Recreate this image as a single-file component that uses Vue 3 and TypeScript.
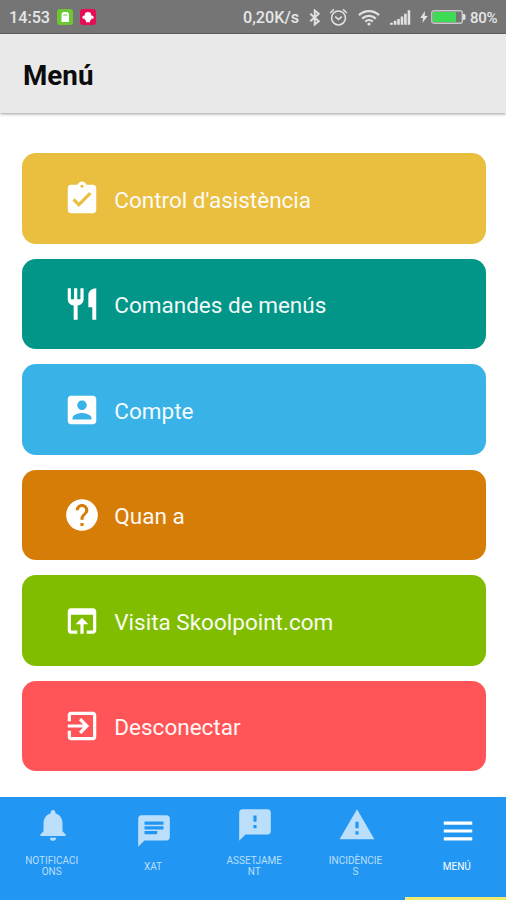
<script setup lang="ts">
interface MenuItem {
  label: string
  tone: string
  icon: string
}

interface Tab {
  lines: string[]
  icon: string
  active?: boolean
}

const items: MenuItem[] = [
  {
    label: "Control d'asistència",
    tone: 'yellow',
    icon: 'M19 3h-4.18C14.4 1.84 13.3 1 12 1c-1.3 0-2.4.84-2.82 2H5c-1.1 0-2 .9-2 2v14c0 1.1.9 2 2 2h14c1.1 0 2-.9 2-2V5c0-1.1-.9-2-2-2zm-7 0c.55 0 1 .45 1 1s-.45 1-1 1-1-.45-1-1 .45-1 1-1zm-2 14l-4-4 1.41-1.41L10 14.17l6.59-6.59L18 9l-8 8z',
  },
  {
    label: 'Comandes de menús',
    tone: 'teal',
    icon: 'M11 9H9V2H7v7H5V2H3v7c0 2.12 1.66 3.84 3.75 3.97V22h2.5v-9.03C11.34 12.84 13 11.12 13 9V2h-2v7zm5-3v8h2.5v8H21V2c-2.76 0-5 2.24-5 4z',
  },
  {
    label: 'Compte',
    tone: 'sky',
    icon: 'M3 5v14c0 1.1.89 2 2 2h14c1.1 0 2-.9 2-2V5c0-1.1-.9-2-2-2H5c-1.11 0-2 .9-2 2zm12 4c0 1.66-1.34 3-3 3s-3-1.34-3-3 1.34-3 3-3 3 1.34 3 3zm-9 8c0-2 4-3.1 6-3.1s6 1.1 6 3.1v1H6v-1z',
  },
  {
    label: 'Quan a',
    tone: 'orange',
    icon: 'M12 2C6.48 2 2 6.48 2 12s4.48 10 10 10 10-4.48 10-10S17.52 2 12 2zm1 17h-2v-2h2v2zm2.07-7.75l-.9.92C13.45 12.9 13 13.5 13 15h-2v-.5c0-1.1.45-2.1 1.17-2.83l1.24-1.26c.37-.36.59-.86.59-1.41 0-1.1-.9-2-2-2s-2 .9-2 2H8c0-2.21 1.79-4 4-4s4 1.79 4 4c0 .88-.36 1.68-.93 2.25z',
  },
  {
    label: 'Visita Skoolpoint.com',
    tone: 'green',
    icon: 'M19 4H5c-1.11 0-2 .9-2 2v12c0 1.1.89 2 2 2h4v-2H5V8h14v10h-4v2h4c1.1 0 2-.9 2-2V6c0-1.1-.89-2-2-2zm-7 6l-4 4h3v6h2v-6h3l-4-4z',
  },
  {
    label: 'Desconectar',
    tone: 'red',
    icon: 'M10.09 15.59L11.5 17l5-5-5-5-1.41 1.41L12.67 11H3v2h9.67l-2.58 2.59zM19 3H5c-1.11 0-2 .9-2 2v4h2V5h14v14H5v-4H3v4c0 1.1.89 2 2 2h14c1.1 0 2-.9 2-2V5c0-1.1-.9-2-2-2z',
  },
]

const tabs: Tab[] = [
  {
    lines: ['NOTIFICACI', 'ONS'],
    icon: 'M12 22c1.1 0 2-.9 2-2h-4c0 1.1.89 2 2 2zm6-6v-5c0-3.07-1.64-5.64-4.5-6.32V4c0-.83-.67-1.5-1.5-1.5s-1.5.67-1.5 1.5v.68C7.63 5.36 6 7.92 6 11v5l-2 2v1h16v-1l-2-2z',
  },
  {
    lines: ['XAT'],
    icon: 'M20 2H4c-1.1 0-1.99.9-1.99 2L2 22l4-4h14c1.1 0 2-.9 2-2V4c0-1.1-.9-2-2-2zM6 9h12v2H6V9zm8 5H6v-2h8v2zm4-6H6V6h12v2z',
  },
  {
    lines: ['ASSETJAME', 'NT'],
    icon: 'M20 2H4c-1.1 0-1.99.9-1.99 2L2 22l4-4h14c1.1 0 2-.9 2-2V4c0-1.1-.9-2-2-2zm-7 12h-2v-2h2v2zm0-4h-2V6h2v4z',
  },
  {
    lines: ['INCIDÈNCIE', 'S'],
    icon: 'M1 21h22L12 2 1 21zm12-3h-2v-2h2v2zm0-4h-2v-4h2v4z',
  },
  {
    lines: ['MENÚ'],
    icon: 'M3 18h18v-2H3v2zm0-5h18v-2H3v2zm0-7v2h18V6H3z',
    active: true,
  },
]
</script>

<template>
  <div class="screen">
    <div class="status">
      <div class="status-left">
        <span class="clock">14:53</span>
        <svg class="badge" viewBox="0 0 16 16">
          <rect width="16" height="16" rx="3" fill="#6cc832" />
          <path d="M4.500 5L6 3h4.500L12 5v8H4.500z" fill="#fff" />
          <path d="M6.300 6h4" stroke="#6cc832" stroke-width="1" />
        </svg>
        <svg class="badge" viewBox="0 0 16 16">
          <rect width="16" height="16" rx="3" fill="#e80c55" />
          <path d="M4.800 6.200a3.200 3.200 0 0 1 6.400 0l2.300 1v2.300l-2.300.3v1.400H10V13.300H6V11.200H4.800V9.800l-2.300-.3V7.200z" fill="#fff" />
        </svg>
      </div>
      <div class="status-right">
        <span class="speed">0,20K/s</span>
        <svg class="bluetooth" viewBox="0 0 12 18" fill="none" stroke="#e2e2e2" stroke-width="2">
          <path d="M1 5l9 8-4.300 3.500v-15L10 5l-9 8" />
        </svg>
        <svg class="alarm" viewBox="0 0 20 20" fill="none" stroke="#e2e2e2" stroke-width="1.6">
          <circle cx="10" cy="10.500" r="7.300" />
          <path d="M6.500 9l3.500 3 3.500-3M1.200 5.200l4-3.700M18.800 5.200l-4-3.700" />
        </svg>
        <svg class="wifi" viewBox="0 0 22 17" fill="none" stroke="#e2e2e2" stroke-width="2.300">
          <path d="M1 6.200a14.500 14.500 0 0 1 20 0M4.200 9.600a9.800 9.800 0 0 1 13.600 0M7.300 12.600a5.400 5.400 0 0 1 7.400 0" />
          <circle cx="11" cy="15" r="1.600" fill="#e2e2e2" stroke="none" />
        </svg>
        <svg class="signal" viewBox="0 0 22 15" fill="#e2e2e2">
          <path d="M0 13h3v2H0zM4 11h2.700v4H4zM7.600 9h2.700v6H7.600zM11.200 6.500h2.700V15h-2.700zM14.800 3.500h2.700V15h-2.700zM18.500 0h2.700v15h-2.700z" />
        </svg>
        <svg class="bolt" viewBox="0 0 8 14" fill="#e2e2e2">
          <path d="M5 0L0 7.600h3L2.300 13 8 5.500H4.800z" />
        </svg>
        <svg class="battery" viewBox="0 0 35 14">
          <rect x=".8" y=".8" width="30.500" height="12.400" rx="2" fill="none" stroke="#c9c9c9" stroke-width="1.400" />
          <rect x="2" y="2" width="23" height="10" fill="#3edb55" />
          <path d="M32 4h1.500l1 1.500v3L33.500 10H32z" fill="#e2e2e2" />
        </svg>
        <span class="percent">80%</span>
      </div>
    </div>

    <header class="header"><h1>Menú</h1></header>

    <main class="menu">
      <button v-for="item in items" :key="item.label" class="card" :class="item.tone">
        <svg class="icon" viewBox="0 0 24 24"><path :d="item.icon" /></svg>
        <span class="label">{{ item.label }}</span>
      </button>
    </main>

    <nav class="tabs">
      <div v-for="tab in tabs" :key="tab.lines[0]" class="tab" :class="{ active: tab.active }">
        <svg class="icon" viewBox="0 0 24 24"><path :d="tab.icon" /></svg>
        <div class="caption">
          <div v-for="line in tab.lines" :key="line">{{ line }}</div>
        </div>
      </div>
      <div class="indicator"></div>
    </nav>
  </div>
</template>

<style>
body {
  margin: 0;
}
</style>

<style scoped>
.screen {
  display: flex;
  flex-direction: column;
  width: 506px;
  height: 900px;
  overflow: hidden;
  background: #fff;
  font-family: Roboto, sans-serif;
}

.status {
  display: flex;
  flex: none;
  justify-content: space-between;
  box-sizing: border-box;
  height: 34px;
  padding: 2px 8px 0 9px;
  background: #757575;
  border-bottom: 1px solid #666;
  color: #e6e6e6;
  font-size: 16.2px;
  font-weight: 500;
}

.status-left,
.status-right {
  display: flex;
  align-items: center;
}

.badge {
  width: 16px;
  height: 16px;
  margin: -1px 0 0 7px;
}

.clock {
  width: 41px;
}

.speed {
  width: 57px;
}

.bluetooth {
  width: 12px;
  height: 17px;
  margin-left: 9px;
}

.alarm {
  width: 19px;
  height: 19px;
  margin: -1px 0 0 8px;
}

.wifi {
  width: 22px;
  height: 17px;
  margin: -1px 0 0 10px;
}

.signal {
  width: 21px;
  height: 15px;
  margin-left: 10px;
}

.bolt {
  width: 8px;
  height: 13px;
  margin: -1px 0 0 9px;
}

.battery {
  width: 35px;
  height: 14px;
  margin: -1px 0 0 3px;
}

.percent {
  width: 28px;
  margin-left: 4px;
  font-size: 15px;
  letter-spacing: -0.3px;
}

.header {
  z-index: 1;
  display: flex;
  flex: none;
  align-items: center;
  height: 79px;
  padding-left: 23px;
  background: #e9e9e9;
  box-shadow: 0 1px 3px rgba(0, 0, 0, 0.4);
}

.header h1 {
  margin: 5px 0 0;
  color: #0c0c0c;
  font-size: 27.8px;
  font-weight: 700;
  line-height: 32px;
}

.menu {
  display: flex;
  flex: 1;
  flex-direction: column;
  gap: 14.9px;
  padding: 40.2px 20.5px 0 21.5px;
}

.card {
  display: flex;
  flex: none;
  align-items: center;
  width: 100%;
  height: 90.6px;
  padding: 0 0 0 41.5px;
  border: 0;
  border-radius: 14px;
  color: #fff;
  font-family: inherit;
}

.icon {
  flex: none;
  width: 38px;
  height: 38px;
  fill: currentColor;
}

.card .icon {
  margin-top: 1px;
}

.label {
  margin: 3px 0 0 13.3px;
  font-size: 22.5px;
  line-height: 28px;
  opacity: 0.95;
}

.yellow { background: #eabe3f; }
.teal { background: #019687; }
.sky { background: #39b3e7; }
.orange { background: #d67d08; }
.green { background: #80bd01; }
.red { background: #ff5558; }

.tabs {
  position: relative;
  display: grid;
  flex: none;
  grid-template-columns: repeat(5, 101.3px);
  box-sizing: border-box;
  height: 103px;
  padding-left: 2px;
  background: #2196f3;
}

.tab {
  display: flex;
  flex-direction: column;
  align-items: center;
  justify-content: center;
  gap: 11px;
  padding-bottom: 14px;
  color: #bbdffb;
}

.tab.active {
  color: #fff;
}

.caption {
  margin-left: -2px;
  font-size: 10px;
  line-height: 11px;
  text-align: center;
}

.indicator {
  position: absolute;
  right: 0;
  bottom: 0;
  width: 101px;
  height: 3px;
  background: #efe970;
}
</style>
